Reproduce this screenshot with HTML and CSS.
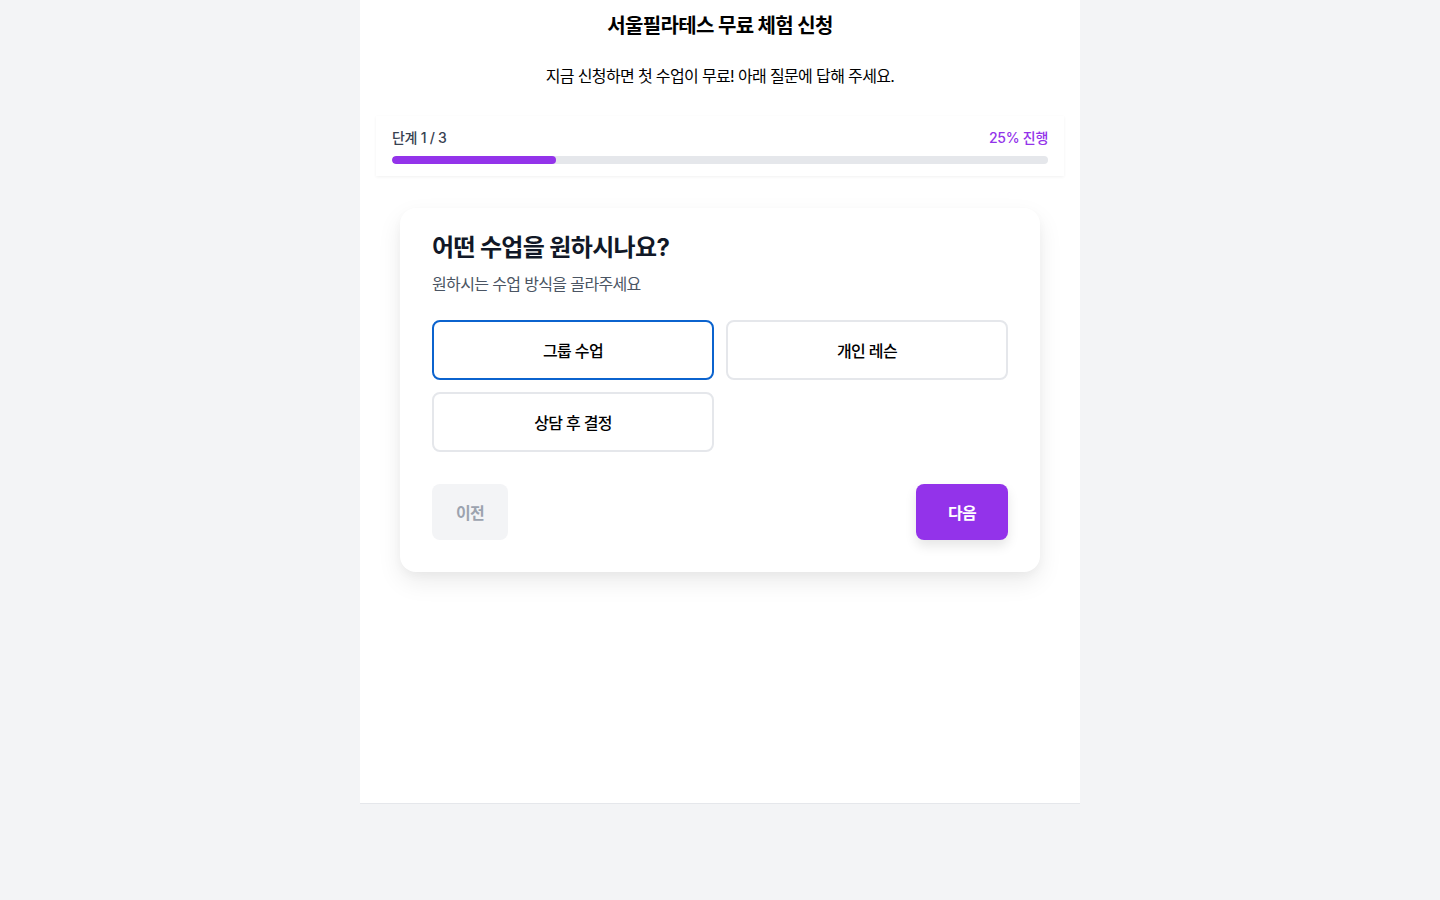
FILE: index.html
```html
<html lang="ko">
	<head>
		<meta charset="UTF-8" />
		<meta name="viewport" content="width=device-width, initial-scale=1.0" />
		<title>서울필라테스 무료 체험 신청</title>
		<link rel="stylesheet" href="styles.css">
	</head>

	<body>
		<div class="page">
			<h1>서울필라테스 무료 체험 신청</h1>
			<p class="lead">지금 신청하면 첫 수업이 무료! 아래 질문에 답해 주세요.</p>

			<div class="progress-card">
				<div class="progress-head">
					<span class="step">단계 1 / 3</span>
					<span class="percent">25% 진행</span>
				</div>
				<div class="progress-track">
					<div class="progress-fill" style="width: 25%"></div>
				</div>
			</div>

			<div class="question-card">
				<h2>어떤 수업을 원하시나요?</h2>
				<p class="hint">원하시는 수업 방식을 골라주세요</p>

				<div class="options">
					<button class="option selected">그룹 수업</button>
					<button class="option">개인 레슨</button>
					<button class="option">상담 후 결정</button>
				</div>

				<div class="nav">
					<button class="btn btn-prev" disabled>이전</button>
					<button class="btn btn-next">다음</button>
				</div>
			</div>
		</div>
	</body>
</html>
```

FILE: styles.css
```css
body {
	font-family: Inter, 'Noto Sans CJK KR', sans-serif;
	margin: 0;
	padding: 0;
	background: #f3f4f6;
	color: #111827;
	letter-spacing: -0.04em;
}

.page {
	width: 720px;
	min-height: 804px;
	margin: 0 auto;
	padding: 12px 16px 0;
	box-sizing: border-box;
	background: #fff;
	border-bottom: 1px solid #e5e7eb;
}

h1 {
	margin: 0;
	font-size: 20px;
	line-height: 28px;
	font-weight: 700;
	text-align: center;
	color: #000;
}

.lead {
	margin: 24px 0 0;
	font-size: 16px;
	line-height: 24px;
	text-align: center;
	color: #000;
}

.progress-card {
	margin-top: 28px;
	padding: 12px 16px 12px;
	background: #fff;
	box-shadow: 0 1px 3px rgba(0, 0, 0, 0.06);
}

.progress-head {
	display: flex;
	justify-content: space-between;
	font-size: 14px;
	line-height: 20px;
	font-weight: 500;
	letter-spacing: -0.02em;
}

.step {
	color: #374151;
}

.percent {
	color: #9333ea;
}

.progress-track {
	margin-top: 8px;
	height: 8px;
	border-radius: 4px;
	background: #e5e7eb;
	overflow: hidden;
}

.progress-fill {
	height: 100%;
	border-radius: 4px;
	background: #9333ea;
}

.question-card {
	margin: 32px 24px 0;
	padding: 24px 32px 32px;
	background: #fff;
	border-radius: 16px;
	box-shadow: 0 10px 25px rgba(0, 0, 0, 0.08), 0 4px 10px rgba(0, 0, 0, 0.03);
}

h2 {
	margin: 0;
	font-size: 24px;
	line-height: 32px;
	font-weight: 700;
	color: #111827;
}

.hint {
	margin: 8px 0 0;
	font-size: 16px;
	line-height: 24px;
	color: #4b5563;
}

.options {
	display: grid;
	grid-template-columns: 1fr 1fr;
	gap: 12px;
	margin-top: 24px;
}

.option {
	height: 60px;
	padding-bottom: 2px;
	border: 2px solid #e5e7eb;
	border-radius: 8px;
	background: #fff;
	font-family: inherit;
	font-size: 16px;
	font-weight: 500;
	letter-spacing: -0.04em;
	color: #000;
	cursor: pointer;
}

.option.selected {
	border-color: #0b63ce;
}

.nav {
	display: flex;
	justify-content: space-between;
	margin-top: 32px;
}

.btn {
	height: 56px;
	padding-bottom: 2px;
	border: none;
	border-radius: 8px;
	font-family: inherit;
	font-size: 16px;
	font-weight: 600;
	letter-spacing: -0.04em;
	cursor: pointer;
}

.btn-prev {
	width: 76px;
	background: #f3f4f6;
	color: #9ca3af;
}

.btn-next {
	width: 92px;
	background: #9333ea;
	color: #fff;
	box-shadow: 0 6px 12px rgba(0, 0, 0, 0.1);
}
```
